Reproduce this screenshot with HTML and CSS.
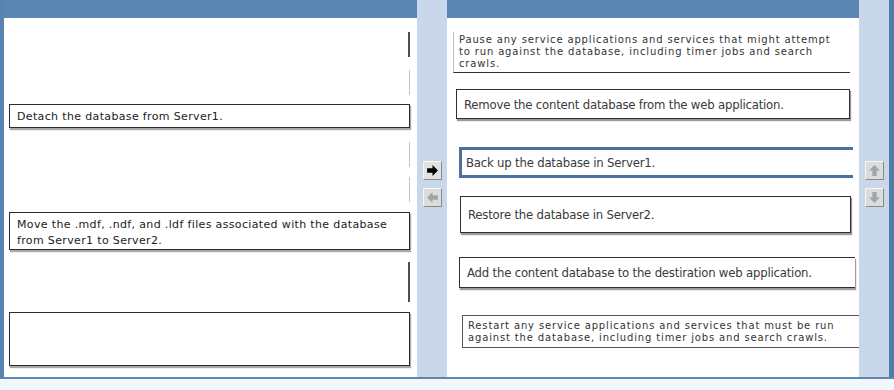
FILE: index.html
```html
<!DOCTYPE html>
<html lang="en">
<head>
<meta charset="UTF-8" />
<title>Build List - Move Content Database</title>
<link rel="stylesheet" href="styles.css">
</head>
<body>
<div class="screen">
  <div class="frame">
    <section class="panel panel-left">
      <div class="panel-bar"></div>
      <div class="panel-body">
        <div class="slot empty dark s1"></div>
        <div class="slot empty s2"></div>
        <div class="slot item s3">Detach the database from Server1.</div>
        <div class="slot empty s4"></div>
        <div class="slot empty s5"></div>
        <div class="slot item s6">Move the .mdf, .ndf, and .ldf files associated with the database from Server1 to Server2.</div>
        <div class="slot empty dark s7"></div>
        <div class="slot item s8"></div>
      </div>
    </section>

    <div class="side side-mid">
      <button class="arrow-btn" aria-label="Move right">
        <svg viewBox="0 0 12 12" width="13" height="13"><polygon points="1,4 6,4 6,1 11,6 6,11 6,8 1,8" fill="#000"/></svg>
      </button>
      <button class="arrow-btn off" aria-label="Move left">
        <svg viewBox="0 0 12 12" width="13" height="13"><polygon points="11,4 6,4 6,1 1,6 6,11 6,8 11,8" fill="#a4a4a4"/></svg>
      </button>
    </div>

    <section class="panel panel-right">
      <div class="panel-bar"></div>
      <div class="panel-body">
        <div class="answer small a1">Pause any service applications and services that might attempt to run against the database, including timer jobs and search crawls.</div>
        <div class="answer a2">Remove the content database from the web application.</div>
        <div class="answer a3 selected">Back up the database in Server1.</div>
        <div class="answer a4">Restore the database in Server2.</div>
        <div class="answer a5">Add the content database to the destiration web application.</div>
        <div class="answer small a6">Restart any service applications and services that must be run against the database, including timer jobs and search crawls.</div>
      </div>
    </section>

    <div class="side side-right">
      <button class="arrow-btn off" aria-label="Move up">
        <svg viewBox="0 0 12 12" width="13" height="13"><polygon points="4,11 4,6 1,6 6,1 11,6 8,6 8,11" fill="#a4a4a4"/></svg>
      </button>
      <button class="arrow-btn off" aria-label="Move down">
        <svg viewBox="0 0 12 12" width="13" height="13"><polygon points="4,1 4,6 1,6 6,11 11,6 8,6 8,1" fill="#a4a4a4"/></svg>
      </button>
    </div>
    <div class="edge"></div>
  </div>
  <div class="floor"></div>
</div>
</body>
</html>
```

FILE: styles.css
```css
html, body {
  margin: 0;
  padding: 0;
  background: #fff;
  font-family: "DejaVu Sans", Verdana, sans-serif;
  color: #222;
}
.screen {
  width: 894px;
  height: 390px;
  overflow: hidden;
}
.frame {
  display: flex;
  height: 377px;
}
.floor {
  height: 13px;
  border-top: 2px solid #5f87b2;
  background: #f3f6fa;
  box-sizing: border-box;
}

/* panels */
.panel {
  display: flex;
  flex-direction: column;
  background: #fff;
}
.panel-left {
  width: 413px;
  border-left: 4px solid #5783b2;
}
.panel-right {
  width: 412px;
}
.panel-bar {
  height: 18px;
  background: #5b86b4;
  flex: none;
}
.panel-body {
  display: flex;
  flex-direction: column;
  flex: 1;
}
.panel-left .panel-body {
  padding-left: 5px;
}

/* left list slots */
.slot {
  width: 401px;
  box-sizing: border-box;
  flex: none;
}
.slot.empty {
  border-right: 1px solid #c4c4c4;
}
.slot.empty.dark {
  border-right: 2px solid #4a4e58;
}
.slot.item {
  border: 1px solid #2a2a2a;
  box-shadow: 1px 2px 1px #a8a8a8;
  font-size: 11px;
  letter-spacing: 0.35px;
  line-height: 16px;
  padding: 4px 7px 0;
}
.s1 { margin-top: 14px; height: 25px; }
.s2 { margin-top: 13px; height: 25px; }
.s3 { margin-top: 9px; height: 24px; }
.s4 { margin-top: 14px; height: 25px; }
.s5 { margin-top: 10px; height: 25px; }
.s6 { margin-top: 10px; height: 38px; padding-top: 2px; line-height: 17px; }
.s7 { margin-top: 12px; height: 40px; }
.s8 { margin-top: 10px; height: 54px; }

/* right list answers */
.answer {
  box-sizing: border-box;
  flex: none;
  border: 1px solid #2e2e2e;
  box-shadow: 1px 2px 1px #9c9c9c;
  font-family: "DejaVu Sans Condensed", "DejaVu Sans", sans-serif;
  font-size: 13px;
  letter-spacing: -0.2px;
  color: #3a3a3a;
  padding: 0 7px;
  display: flex;
  align-items: center;
}
.answer.small {
  display: block;
  font-family: "DejaVu Sans", Verdana, sans-serif;
  font-size: 10px;
  letter-spacing: 0.85px;
  line-height: 12px;
  box-shadow: none;
  color: #333;
}
.a1 {
  margin: 14px 0 0 6px;
  width: 397px;
  height: 41px;
  border-width: 0 0 1px 1px;
  border-left-color: #bcbcbc;
  padding: 2px 5px;
}
.a2 { margin: 16px 0 0 9px; width: 394px; height: 30px; }
.a3 { margin: 28px 0 0 12px; width: 394px; height: 31px; }
.a4 { margin: 18px 0 0 13px; width: 391px; height: 37px; }
.a5 { margin: 24px 0 0 12px; width: 396px; height: 31px; border-right: none; }
.a6 {
  margin: 27px 0 0 15px;
  width: 397px;
  height: 33px;
  border-right: none;
  border-color: #555;
  box-shadow: 0 1px 1px #bbb;
  padding: 4px 5px;
  letter-spacing: 0.75px;
}
.answer.selected {
  border: 3px solid #4f6f9c;
  border-right: none;
  box-shadow: none;
  padding-left: 4px;
}

/* side columns with arrow buttons */
.side {
  width: 30px;
  background: #c8d8ea;
  display: flex;
  flex-direction: column;
  gap: 8px;
  padding: 161px 0 0 6px;
  box-sizing: border-box;
}
.edge {
  width: 5px;
  background: #4f7bab;
}
.arrow-btn {
  width: 19px;
  height: 19px;
  padding: 0;
  display: flex;
  align-items: center;
  justify-content: center;
  background: #e2e2e2;
  border: 1px solid;
  border-color: #f6f6f6 #8a8a8a #8a8a8a #f6f6f6;
  cursor: pointer;
}
.arrow-btn.off {
  background: #dcdcdc;
  cursor: default;
}
```
